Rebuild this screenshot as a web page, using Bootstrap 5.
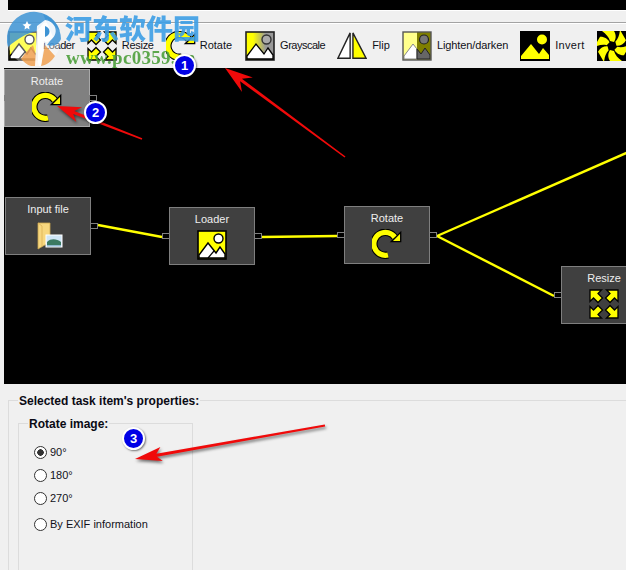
<!DOCTYPE html>
<html lang="en">
<head>
<meta charset="utf-8">
<title>Image task editor</title>
<link href="https://cdn.jsdelivr.net/npm/bootstrap@5.3.0/dist/css/bootstrap.min.css" rel="stylesheet">
<style>
html,body{margin:0;background:#f0f0f0;}
body{font-family:"Liberation Sans",Arial,sans-serif;font-size:11px;color:#101018;}
.app-shell{position:relative;width:626px;height:570px;overflow:hidden;background:#f0f0f0;}
.top-strip{height:23px;border-bottom:1px solid #a3a3a3;box-shadow:0 1px 0 #fff;padding-left:8px;}
.top-black{height:11px;background:#000;border-bottom:1px solid #fff;}
.tool-row{height:45px;padding-left:8px;gap:12px;white-space:nowrap;overflow:hidden;}
.tool-item{gap:5px;flex:none;}
.tool-ico{width:30px;height:30px;flex:none;display:block;}
.ls-loader{letter-spacing:-.4px;}
.ls-resize{letter-spacing:-.3px;}
.ls-rotate{letter-spacing:0;margin-left:-1px;margin-right:1px;}
.ls-gray{letter-spacing:-.5px;}
.ls-light{letter-spacing:-.1px;}
.ls-inv{letter-spacing:.3px;}
.flow-canvas{position:relative;height:316px;margin-left:4px;background:#000;overflow:hidden;}
.wire-layer{position:absolute;left:0;top:0;width:622px;height:316px;}
.flow-node{position:absolute;width:86px;height:58px;background:#404040;border:1px solid #7f7f7f;color:#eee;padding-top:4px;line-height:15px;}
.flow-node.is-picked{background:#808080;border-color:#a8a8a8;}
.flow-port{position:absolute;top:25px;width:8px;height:6px;border:1px solid #808080;background:#000;}
.port-in{left:-8px;}
.port-out{right:-8px;}
.node-ico{width:30px;height:30px;margin-top:3px;display:block;}
.nd-a{left:0;top:1px;}
.nd-b{left:1px;top:129px;}
.nd-c{left:165px;top:139px;}
.nd-d{left:340px;top:138px;}
.nd-e{left:557px;top:198px;}
.props-pane{padding:7px 0 0 8px;}
.prop-set{border:1px solid #dcdcdc;border-right:0;border-bottom:0;padding:0 0 0 9px;margin:0;height:190px;min-width:0;}
.prop-set legend{float:none;width:auto;font-size:12px;font-weight:700;line-height:17px;margin:0;padding:2px 1px 0;color:#0a0a14;}
.prop-sub{border:1px solid #dcdcdc;border-bottom:0;width:175px;height:160px;padding:0 0 0 9px;margin:4px 0 0 0;}
.radio-stack{margin:8px 0 0 6px;}
.radio-line{display:flex;align-items:center;gap:3px;height:23px;margin:0;padding:0;min-height:0;}
.radio-line .form-check-input{float:none;margin:0;width:13px;height:13px;background-color:#fff;border:1px solid #333;flex:none;}
.radio-line .form-check-input:checked{background-image:radial-gradient(circle,#333 0 3px,transparent 3.5px);background-color:#fff;border-color:#333;}
.radio-gap{margin-top:3px;}
.over-art{position:absolute;left:0;top:0;width:626px;height:570px;pointer-events:none;}
.red-arrows{filter:drop-shadow(1px 2px 1.5px rgba(0,0,0,.55));}
.wm-logo{position:absolute;left:7px;top:11px;width:54px;height:56px;}
.wm-cn{position:absolute;left:65px;top:10px;font-family:"Noto Sans CJK SC",sans-serif;font-weight:900;font-size:27px;line-height:36px;color:#3d9fe6;opacity:.9;white-space:nowrap;}
.wm-url{position:absolute;left:66px;top:47px;font-family:"Liberation Serif",serif;font-weight:700;font-size:19px;line-height:22px;letter-spacing:.3px;color:#4ea03c;opacity:.9;white-space:nowrap;}
.step-dot{position:absolute;width:23px;height:23px;border-radius:50%;background:#0000e6;border:2px solid #fff;color:#fff;font:700 13px/19px "Liberation Sans",sans-serif;text-align:center;box-shadow:1px 1px 2px rgba(0,0,0,.5);}
.dot-1{left:173px;top:54px;}
.dot-2{left:84px;top:101px;}
.dot-3{left:122px;top:427px;}
</style>
</head>
<body>
<svg width="0" height="0" class="position-absolute">
<defs>
<linearGradient id="gFade" x1="0" x2="1" y1="0" y2="0"><stop offset=".25" stop-color="#ff0"/><stop offset=".7" stop-color="#999"/></linearGradient>
<symbol id="icPic" viewBox="0 0 30 30"><rect x="1" y="1" width="28" height="28" fill="#ff0" stroke="#000" stroke-width="1.6"/><path d="M2 28V25L11 13 19 23 23 17 28 24V28Z" fill="#fff" stroke="#000" stroke-width="1.4"/><path d="M11 28 17 21" stroke="#000" stroke-width="1.2"/><circle cx="21.500" cy="8.500" r="4.500" fill="#fff" stroke="#000" stroke-width="1.4"/></symbol>
<symbol id="icGray" viewBox="0 0 30 30"><rect x="1" y="1" width="28" height="28" fill="url(#gFade)" stroke="#222" stroke-width="1.6"/><path d="M2 28V25L11 13 19 23 23 17 28 24V28Z" fill="#fff" stroke="#000" stroke-width="1.3"/><circle cx="21.500" cy="8.500" r="4.500" fill="#aaa" stroke="#333" stroke-width="1.4"/></symbol>
<symbol id="icLight" viewBox="0 0 30 30"><rect x="1" y="1" width="14" height="28" fill="#ffff8c"/><rect x="15" y="1" width="14" height="28" fill="#7f7f00"/><path d="M2 28V25L11 13 15 18V28Z" fill="#fff" stroke="#888" stroke-width="1"/><path d="M15 18 19 23 23 17 28 24V28H15Z" fill="#666" stroke="#222" stroke-width="1"/><circle cx="22" cy="8.500" r="4.500" fill="#777" stroke="#222" stroke-width="1.2"/><rect x="1" y="1" width="28" height="28" fill="none" stroke="#555" stroke-width="1.4"/></symbol>
<symbol id="icInv" viewBox="0 0 30 30"><rect x="0" y="0" width="30" height="30" fill="#000"/><path d="M1 28V25L11 13 19 23 23 17 29 24V28H11L17 21 12 28Z" fill="#ff0"/><circle cx="22" cy="8.500" r="5" fill="#ff0"/></symbol>
<symbol id="icRot" viewBox="0 0 30 30"><path d="M23 8.500A11.500 11.500 0 1 0 16 26" fill="none" stroke="#000" stroke-width="7.400"/><path d="M23 8.500A11.500 11.500 0 1 0 16 26" fill="none" stroke="#ff0" stroke-width="5.200"/><path d="M28.700 3.300V12.700H19.300Z" fill="#ff0" stroke="#000" stroke-width="1.300"/></symbol>
<symbol id="icArrows" viewBox="0 0 30 30"><g fill="#ff0" stroke="#000" stroke-width="1.300"><path id="oneArr" d="M1 1H12.500L9 4.500 13.500 9 9 13.500 4.500 9 1 12.500Z"/><use href="#oneArr" transform="matrix(-1 0 0 1 30 0)"/><use href="#oneArr" transform="matrix(1 0 0 -1 0 30)"/><use href="#oneArr" transform="matrix(-1 0 0 -1 30 30)"/></g></symbol>
<symbol id="icFlip" viewBox="0 0 32 30"><path d="M14 1V28H1Z" fill="#fff" stroke="#222" stroke-width="1.500"/><path d="M17 1V28H31Z" fill="#ff0" stroke="#222" stroke-width="1.500"/></symbol>
<symbol id="icSwirl" viewBox="0 0 30 30"><rect width="30" height="30" fill="#000"/><g fill="#ff0"><path id="oneBlade" d="M13 10C12 6 9 3 5 0H17C19.500 4 19 8 17 11Z"/><use href="#oneBlade" transform="rotate(60 15 15)"/><use href="#oneBlade" transform="rotate(120 15 15)"/><use href="#oneBlade" transform="rotate(180 15 15)"/><use href="#oneBlade" transform="rotate(240 15 15)"/><use href="#oneBlade" transform="rotate(300 15 15)"/></g></symbol>
<symbol id="icFolder" viewBox="0 0 30 30"><path d="M5 3H17V22L5 29Z" fill="#f7d77f" stroke="#c9a44e" stroke-width=".8"/><path d="M5 3 9 6V26" fill="none" stroke="#e2b95f"/><rect x="13" y="15" width="16" height="12" fill="#cfe6f7" stroke="#fff"/><path d="M14 22C18 18 24 19 28 22V25H14Z" fill="#3c7a62"/><path d="M14 25H28V26.500H14Z" fill="#8fb8cf"/></symbol>
</defs>
</svg>

<div class="app-shell">
  <div class="top-strip"><div class="top-black"></div></div>

  <div class="tool-row d-flex align-items-center">
    <div class="tool-item d-flex align-items-center"><svg class="tool-ico"><use href="#icPic"/></svg><span class="ls-loader">Loader</span></div>
    <div class="tool-item d-flex align-items-center"><svg class="tool-ico"><use href="#icArrows"/></svg><span class="ls-resize">Resize</span></div>
    <div class="tool-item d-flex align-items-center"><svg class="tool-ico"><use href="#icRot"/></svg><span class="ls-rotate">Rotate</span></div>
    <div class="tool-item d-flex align-items-center"><svg class="tool-ico"><use href="#icGray"/></svg><span class="ls-gray">Grayscale</span></div>
    <div class="tool-item d-flex align-items-center"><svg class="tool-ico"><use href="#icFlip"/></svg><span>Flip</span></div>
    <div class="tool-item d-flex align-items-center"><svg class="tool-ico"><use href="#icLight"/></svg><span class="ls-light">Lighten/darken</span></div>
    <div class="tool-item d-flex align-items-center"><svg class="tool-ico"><use href="#icInv"/></svg><span class="ls-inv">Invert</span></div>
    <div class="tool-item d-flex align-items-center"><svg class="tool-ico"><use href="#icSwirl"/></svg></div>
  </div>

  <div class="flow-canvas">
    <svg class="wire-layer" viewBox="4 68 622 316">
      <g stroke="#ff0" stroke-width="2.400" fill="none">
        <path d="M98 225 162 237"/><path d="M262 237 337 236"/><path d="M437 236 640 147"/><path d="M437 236 554 296"/>
      </g>
    </svg>
    <div class="flow-node is-picked nd-a d-flex flex-column align-items-center"><span>Rotate</span><svg class="node-ico"><use href="#icRot"/></svg><i class="flow-port port-in"></i><i class="flow-port port-out"></i></div>
    <div class="flow-node nd-b d-flex flex-column align-items-center"><span>Input file</span><svg class="node-ico"><use href="#icFolder"/></svg><i class="flow-port port-out"></i></div>
    <div class="flow-node nd-c d-flex flex-column align-items-center"><span>Loader</span><svg class="node-ico"><use href="#icPic"/></svg><i class="flow-port port-in"></i><i class="flow-port port-out"></i></div>
    <div class="flow-node nd-d d-flex flex-column align-items-center"><span>Rotate</span><svg class="node-ico"><use href="#icRot"/></svg><i class="flow-port port-in"></i><i class="flow-port port-out"></i></div>
    <div class="flow-node nd-e d-flex flex-column align-items-center"><span>Resize</span><svg class="node-ico"><use href="#icArrows"/></svg><i class="flow-port port-in"></i></div>
  </div>

  <div class="props-pane">
    <fieldset class="prop-set">
      <legend>Selected task item's properties:</legend>
      <fieldset class="prop-sub">
        <legend>Rotate image:</legend>
        <div class="radio-stack">
        <div class="form-check radio-line"><input class="form-check-input" type="radio" name="rot" id="r90" checked><label for="r90">90°</label></div>
        <div class="form-check radio-line"><input class="form-check-input" type="radio" name="rot" id="r180"><label for="r180">180°</label></div>
        <div class="form-check radio-line"><input class="form-check-input" type="radio" name="rot" id="r270"><label for="r270">270°</label></div>
        <div class="form-check radio-line radio-gap"><input class="form-check-input" type="radio" name="rot" id="rex"><label for="rex">By EXIF information</label></div>
        </div>
      </fieldset>
    </fieldset>
  </div>

  <svg class="wm-logo" viewBox="0 0 54 56">
    <circle cx="27" cy="28" r="27" fill="#fff" fill-opacity=".35"/>
    <path d="M1 36A27 27 0 0 1 53 20L40 8 30 20C20 22 10 28 1 36Z" fill="#3d93d4" fill-opacity=".85"/>
    <path d="M54 28A27 27 0 0 0 36 3L46 26 40 34C47 36 52 33 54 28Z" fill="#3d93d4" fill-opacity=".85"/>
    <path d="M14 48C18 42 22 38 26 34L32 55H24C20 54 17 51 14 48ZM38 34 34 55C40 54 45 50 48 45Z" fill="#f0a050" fill-opacity=".85"/>
    <path d="M30 15 38 9C51 11 53 26 40 31L37 32 34 55H28Z" fill="#fff" fill-opacity=".9"/>
    <path d="M38 15C44 17 44 24 38 26Z" fill="#3d93d4"/>
    <path d="M20 10l1.500 3 3 .5-2.500 2 .5 3-2.500-1.500-2.500 1.500.5-3-2.500-2 3-.5Z" fill="#fff"/>
  </svg>
  <div class="wm-cn">河东软件园</div>
  <div class="wm-url">www.pc0359.cn</div>

  <svg class="over-art red-arrows" viewBox="0 0 626 570">
    <g fill="#f00a0a">
      <polygon points="225,68 252.800,77.600 241.900,78.800 345.500,156.400 344.500,157.600 240.100,81.200 242,92"/>
      <polygon points="57,106 82.200,107.200 74.200,111.100 142.300,138.300 141.700,139.700 73.200,113.900 76.400,122"/>
      <polygon points="135,459 160.400,447 156.400,453.700 324.800,424.500 325.200,426.500 157,456.700 162.800,461"/>
    </g>
  </svg>
  <div class="step-dot dot-1">1</div>
  <div class="step-dot dot-2">2</div>
  <div class="step-dot dot-3">3</div>
</div>
<script src="https://cdn.jsdelivr.net/npm/bootstrap@5.3.0/dist/js/bootstrap.bundle.min.js"></script>
</body>
</html>
